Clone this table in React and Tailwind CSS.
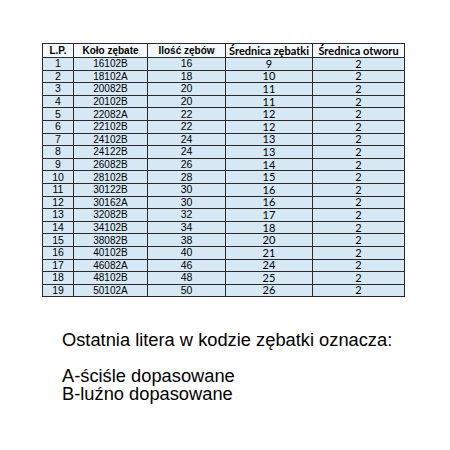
import React from "react";

const rows = [
  ["1", "16102B", "16", "9", "2"],
  ["2", "18102A", "18", "10", "2"],
  ["3", "20082B", "20", "11", "2"],
  ["4", "20102B", "20", "11", "2"],
  ["5", "22082A", "22", "12", "2"],
  ["6", "22102B", "22", "12", "2"],
  ["7", "24102B", "24", "13", "2"],
  ["8", "24122B", "24", "13", "2"],
  ["9", "26082B", "26", "14", "2"],
  ["10", "28102B", "28", "15", "2"],
  ["11", "30122B", "30", "16", "2"],
  ["12", "30162A", "30", "16", "2"],
  ["13", "32082B", "32", "17", "2"],
  ["14", "34102B", "34", "18", "2"],
  ["15", "38082B", "38", "20", "2"],
  ["16", "40102B", "40", "21", "2"],
  ["17", "46082A", "46", "24", "2"],
  ["18", "48102B", "48", "25", "2"],
  ["19", "50102A", "50", "26", "2"],
];

const arial = "font-['Liberation_Sans',Arial,sans-serif]";
const calibri = "font-['Lato','Open_Sans',sans-serif]";

export default function App() {
  return (
    <div className="w-[450px] h-[450px] bg-white pt-[43px] text-black">
      <table className="ml-[42px] border-collapse table-fixed">
        <colgroup>
          <col className="w-[31px]" />
          <col className="w-[74px]" />
          <col className="w-[78px]" />
          <col className="w-[87px]" />
          <col className="w-[92px]" />
        </colgroup>
        <thead>
          <tr className="h-[14px] bg-[#f4f9fc]">
            <th className={`border border-[#2a2a2a] p-0 text-[10px] leading-[12px] font-bold ${arial}`}>L.P.</th>
            <th className={`border border-[#2a2a2a] p-0 text-[10px] leading-[12px] font-bold ${arial}`}>Koło zębate</th>
            <th className={`border border-[#2a2a2a] p-0 text-[10px] leading-[12px] font-bold ${arial}`}>Ilość zębów</th>
            <th className={`border border-[#2a2a2a] p-0 text-[11px] leading-[11px] font-bold ${calibri}`}>Średnica zębatki</th>
            <th className={`border border-[#2a2a2a] p-0 text-[11px] leading-[11px] font-bold ${calibri}`}>Średnica otworu</th>
          </tr>
        </thead>
        <tbody>
          {rows.map((r) => (
            <tr key={r[0]} className="h-[12.6px] bg-[#d5e8f4]">
              <td className={`border border-[#2a2a2a] p-0 text-center text-[10.5px] leading-[11px] ${arial}`}>{r[0]}</td>
              <td className={`border border-[#2a2a2a] p-0 text-center text-[10px] leading-[11px] ${arial}`}>{r[1]}</td>
              <td className={`border border-[#2a2a2a] p-0 text-center text-[10.5px] leading-[11px] ${arial}`}>{r[2]}</td>
              <td className={`border border-[#2a2a2a] p-0 text-center text-[11px] leading-[10px] ${calibri}`}>{r[3]}</td>
              <td className={`border border-[#2a2a2a] p-0 text-center text-[11px] leading-[10px] ${calibri}`}>{r[4]}</td>
            </tr>
          ))}
        </tbody>
      </table>

      <div className={`ml-[62px] mt-[34px] text-[18.3px] leading-[18px] ${arial}`}>
        <p>Ostatnia litera w kodzie zębatki oznacza:</p>
        <p className="mt-[18px]">A-ściśle dopasowane</p>
        <p>B-luźno dopasowane</p>
      </div>
    </div>
  );
}
